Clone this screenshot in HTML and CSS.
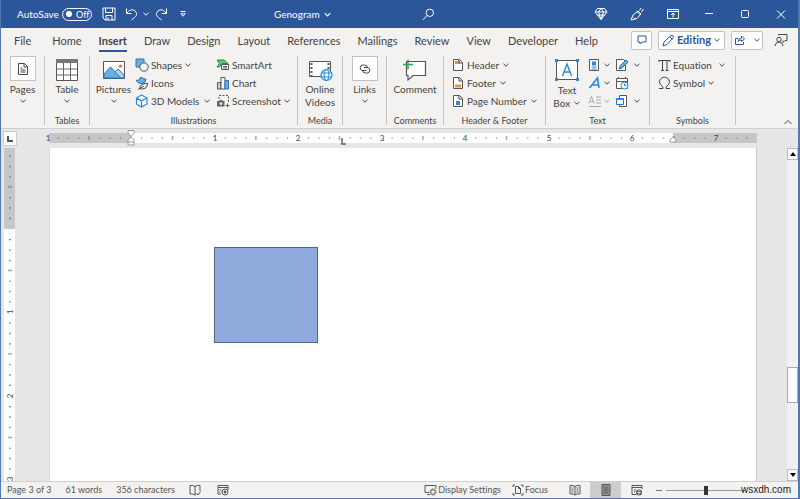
FILE: index.html
```html
<!DOCTYPE html>
<html lang="en">
<head>
<meta charset="utf-8">
<title>Genogram</title>
<link rel="stylesheet" href="styles.css">
</head>
<body>
<svg class="defs" aria-hidden="true">
  <symbol id="chev" viewBox="0 0 8 8"><path d="M1.500 2.800 4 5.200 6.500 2.800" fill="none" stroke="currentColor"/></symbol>
  <pattern id="inch" width="83.500" height="12" patternUnits="userSpaceOnUse" x="82" y="0">
    <path d="M10 6h1.200M20.400 6h1.200M30.800 6h1.200M51.600 6h1.200M62 6h1.200M72.400 6h1.200" stroke="#666" stroke-width="1.200"/>
    <path d="M41.500 4v4" stroke="#777"/>
  </pattern>
  <pattern id="vinch" width="12" height="83.500" patternUnits="userSpaceOnUse" x="0" y="81">
    <path d="M6 10v1.200M6 20.400v1.200M6 30.800v1.200M6 51.600v1.200M6 62v1.200M6 72.400v1.200" stroke="#666" stroke-width="1.600"/>
    <path d="M4 41.500h4" stroke="#777"/>
  </pattern>
</svg>
<div class="window">
  <header class="titlebar">
    <div class="quick">
      <span id="autosave">AutoSave</span>
      <button class="switch" role="switch" aria-checked="false" aria-labelledby="autosave"><i></i>Off</button>
      <button class="tool save" aria-label="Save"><svg width="14" height="14" viewBox="0 0 14 14"><path d="M1 1h12v12H3l-2-2zM3.500 1v4.500h7V1M4 13V8.500h6V13M6 10.500V13" class="ln"/></svg></button>
      <button class="tool undo" aria-label="Undo"><svg width="13" height="14" viewBox="0 0 13 14"><path d="M1.500 1.500v5h5M1.800 6.200C4 3 7.500 1.600 10 4s1.800 5-.5 6.500L6.500 13" class="ln"/></svg></button>
      <button class="tool" aria-label="Undo options"><svg width="8" height="8"><use href="#chev"/></svg></button>
      <button class="tool redo" aria-label="Redo"><svg width="13" height="14" viewBox="0 0 13 14"><path d="M11.500 1.500v5h-5M11.200 6.200C9 3 5.500 1.600 3 4s-1.800 5 .5 6.500L6.500 13" class="ln"/></svg></button>
      <button class="tool more" aria-label="Customize toolbar"><svg width="8" height="8" viewBox="0 0 8 8"><path d="M1.500 1.500h5M1.800 3.800h4.400L4 6.200z" class="ln"/></svg></button>
    </div>
    <button class="docname">Genogram <svg width="9" height="9" viewBox="0 0 8 8"><use href="#chev"/></svg></button>
    <button class="tool search" aria-label="Search"><svg width="13" height="13" viewBox="0 0 13 13"><circle cx="7.800" cy="4.800" r="3.700" class="ln"/><path d="M5 7.500 1 11.800" class="ln"/></svg></button>
    <div class="sys">
      <button class="tool" aria-label="Premium"><svg width="14" height="14" viewBox="0 0 14 14"><path d="M3.500 1.500h7L13 5l-6 7.500L1 5zM1 5h12M4.500 5 7 12.500 9.500 5 7 1.500zM3 8h8" class="ln"/></svg></button>
      <button class="tool" aria-label="Designer"><svg width="14" height="14" viewBox="0 0 14 14"><path d="M1 13 3 8l5-4 3 3-4 4.500L1.500 13M7 4.500l3.500 3.500M9.500 3.500 11 1M11.500 5 13.500 2M3.500 10.500 5 12" class="ln"/></svg></button>
      <button class="tool" aria-label="Ribbon display"><svg width="14" height="14" viewBox="0 0 14 14"><path d="M1.500 2.500h11v9h-11zM1.500 4.500h11M7 10.500V6M5 8l2-2 2 2" class="ln"/></svg></button>
      <button class="tool" aria-label="Minimize"><svg width="14" height="14" viewBox="0 0 14 14"><path d="M3 6.500h8" class="ln"/></svg></button>
      <button class="tool" aria-label="Maximize"><svg width="14" height="14" viewBox="0 0 14 14"><rect x="3.500" y="3.500" width="7" height="7" rx="1" class="ln"/></svg></button>
      <button class="tool" aria-label="Close"><svg width="14" height="14" viewBox="0 0 14 14"><path d="m3 3.500 8 8m0-8-8 8" class="ln"/></svg></button>
    </div>
  </header>

  <nav class="tabs">
    <a href="#file" class="file">File</a><a href="#home">Home</a><a href="#insert" class="active">Insert</a><a href="#draw">Draw</a><a href="#design">Design</a><a href="#layout">Layout</a><a href="#references">References</a><a href="#mailings">Mailings</a><a href="#review">Review</a><a href="#view">View</a><a href="#developer">Developer</a><a href="#help">Help</a>
    <div class="share">
      <button class="box" aria-label="Comments"><svg width="12" height="12" viewBox="0 0 12 12"><path d="M2 2h8v6H6L4 10V8H2z" class="ln"/></svg></button>
      <button class="box edit"><svg width="13" height="13" viewBox="0 0 13 13"><path d="m1 12 1-4 7-6.500q2.500-.5 2.500 2L5 10.500zM8 3l2.500 2.500" class="ln"/></svg>Editing<svg width="8" height="8"><use href="#chev"/></svg></button>
      <button class="box send" aria-label="Share"><svg width="12" height="12" viewBox="0 0 12 12"><path d="M4 4.500H1.500v6h8V8M4 7.500Q4.500 4 7.500 4V2l3 3-3 2.500V6Q5 6 4 7.500z" class="ln"/></svg><svg width="8" height="8"><use href="#chev"/></svg></button>
      <button class="tool people" aria-label="Catch up"><svg width="14" height="14" viewBox="0 0 14 14"><circle cx="5" cy="6.500" r="2.200" class="ln"/><path d="M1 13q.5-4 4-4t4 4M4.500 2.500v-1h8.500v6h-2L9 9.500V7.500" class="ln"/></svg></button>
    </div>
  </nav>

  <section class="ribbon">
    <div class="group">
      <button class="big"><span class="tile"><svg width="12" height="14" viewBox="0 0 12 14"><path d="M1.500 1.500h6L10.500 4.500v8h-9zM7 1.500V5h3.500M3.500 6h2M3.500 8h5M3.500 10h5" class="ln"/></svg></span>Pages<svg width="8" height="8"><use href="#chev"/></svg></button>
    </div>
    <div class="group">
      <button class="big"><span class="pic"><svg width="24" height="24" viewBox="0 0 24 24"><path d="M1.500 1.500h21v21h-21z" fill="#fff" stroke="#555"/><path d="M1 1h22v4H1z" fill="#777"/><path d="M1.500 11h21M1.500 17h21M8.500 5v17M15.500 5v17" stroke="#666"/></svg></span>Table<svg width="8" height="8"><use href="#chev"/></svg></button>
      <h2>Tables</h2>
    </div>
    <div class="group illus">
      <div class="row">
        <button class="big"><span class="pic"><svg width="24" height="24" viewBox="0 0 24 24"><path d="M1.500 3.500h21v17h-21z" fill="#fff" stroke="#555"/><path d="M2 16 8.500 9l11 11H2z" fill="#69afe5" stroke="#2176bd"/><path d="m13 14 3-3 6 6v3h-3z" fill="#a9d1f1" stroke="#2176bd"/><circle cx="18.500" cy="8" r="1.600" fill="#dc762c"/></svg></span>Pictures<svg width="8" height="8"><use href="#chev"/></svg></button>
        <div class="stack models">
          <button><svg width="14" height="14" viewBox="0 0 14 14"><path d="M1 1h8v8H1z" fill="#69afe5" stroke="#2176bd"/><circle cx="9" cy="9" r="4.200" fill="#f3f2f1" stroke="#555"/></svg>Shapes<svg width="8" height="8"><use href="#chev"/></svg></button>
          <button><svg width="14" height="14" viewBox="0 0 14 14"><path d="M1 4q2 1 3 0Q4 1 7 1.500L9 3H11Q11 7 7 7.500 2 7.500 1 4z" fill="#69afe5" stroke="#2176bd"/><path d="M5 12.500Q4 7.500 12.500 7.500q0 5.500-6 5.500zM3 13.500 9 10" class="ln"/></svg>Icons</button>
          <button class="wide"><svg width="14" height="14" viewBox="0 0 14 14"><path d="m6.500 1 5.500 3v6l-5.500 3L1.500 10V4zM1.500 4l5 3L12 4M6.500 7v6" fill="#fff" stroke="#2b88d8" stroke-width="1.200"/></svg>3D Models<svg width="8" height="8"><use href="#chev"/></svg></button>
        </div>
        <div class="stack">
          <button><svg width="14" height="14" viewBox="0 0 14 14"><path d="M1 2h7l4 3.500H6L3.500 9H1l2.500-3.500z" fill="#72bf7c" stroke="#268a43"/><path d="M5.500 6.500h7v5h-7zM7 8.500h4M7 10h4" fill="#fff" stroke="#555"/></svg>SmartArt</button>
          <button><svg width="14" height="14" viewBox="0 0 14 14"><path d="M1.500 6.500H5V13H1.500z" fill="#ccc" stroke="#555"/><path d="M5 1.500h4V13H5z" fill="#fff" stroke="#555"/><path d="M9 4.500h3.500V13H9z" fill="#69afe5" stroke="#2176bd"/></svg>Chart</button>
          <button><svg width="14" height="14" viewBox="0 0 14 14"><path d="M3 5V1.500h9.500V9" fill="none" stroke="#555" stroke-dasharray="2 1.500"/><path d="M1 7h2l1-1h2l1 1h1.500v5.500H1z" fill="#666"/><circle cx="5" cy="9.500" r="1.500" fill="#ddd"/><path d="M9.500 11.500h4M11.500 9.500v4" stroke="#268a43"/></svg>Screenshot<svg width="8" height="8"><use href="#chev"/></svg></button>
        </div>
      </div>
      <h2>Illustrations</h2>
    </div>
    <div class="group">
      <button class="big"><span class="pic"><svg width="25" height="24" viewBox="0 0 25 24"><path d="M1.500 3.500h21v15h-21z" fill="#fff" stroke="#555"/><path d="M3.500 5v13M20.500 5v13" stroke="#555" stroke-width="2" stroke-dasharray="2 2"/><circle cx="18.500" cy="17" r="5.500" fill="#fff" stroke="#1f87d5" stroke-width="1.200"/><ellipse cx="18.500" cy="17" rx="2.400" ry="5.500" fill="none" stroke="#1f87d5"/><path d="M13.500 15h10M13.500 19h10" stroke="#1f87d5"/></svg></span>Online<br>Videos</button>
      <h2>Media</h2>
    </div>
    <div class="group">
      <button class="big"><span class="tile"><svg width="14" height="12" viewBox="0 0 14 12"><path d="M8 7.500H4.500a2.800 2.800 0 0 1 0-5.500h2q3 0 3 3M6 4.500h3.500a2.800 2.800 0 0 1 0 5.500h-2q-3 0-3-3" class="ln"/></svg></span>Links<svg width="8" height="8"><use href="#chev"/></svg></button>
    </div>
    <div class="group">
      <button class="big"><span class="pic"><svg width="26" height="24" viewBox="0 0 26 24"><path d="M4.500 3.500h19v14H11L6 22v-4.500H4.500z" fill="#fff" stroke="#555" stroke-width="1.200"/><path d="M1 6.500h10M6 1.500v10" stroke="#33a457" stroke-width="1.400"/></svg></span>Comment</button>
      <h2>Comments</h2>
    </div>
    <div class="group">
      <div class="stack hf">
        <button><svg width="12" height="14" viewBox="0 0 12 14"><path d="M1.500 1.500h6l3 3v8h-9z" fill="#fff" stroke="#555"/><path d="M3 3h4.500v3H3z" fill="#e8963c"/><path d="M7 1.500V5h3.500" class="ln"/></svg>Header<svg width="8" height="8"><use href="#chev"/></svg></button>
        <button><svg width="12" height="14" viewBox="0 0 12 14"><path d="M1.500 1.500h6l3 3v8h-9z" fill="#fff" stroke="#555"/><path d="M3 8.500h6v3H3z" fill="#e8963c"/><path d="M7 1.500V5h3.500" class="ln"/></svg>Footer<svg width="8" height="8"><use href="#chev"/></svg></button>
        <button><svg width="12" height="14" viewBox="0 0 12 14"><path d="M1.500 1.500h6l3 3v8h-9z" fill="#fff" stroke="#555"/><path d="M4 7h4v4H4z" fill="#2b88d8"/><path d="M7 1.500V5h3.500" class="ln"/></svg>Page Number<svg width="8" height="8"><use href="#chev"/></svg></button>
      </div>
      <h2>Header &amp; Footer</h2>
    </div>
    <div class="group">
      <div class="row">
        <button class="big textbox"><span class="pic"><svg width="26" height="24" viewBox="0 0 26 24"><path d="M2.500 2.500h21v19h-21z" fill="#fff" stroke="#555"/><path d="M8.500 18 13 6l4.500 12M10 14h6" fill="none" stroke="#2b88d8" stroke-width="1.400"/><path d="M1 1h3v3H1zM22 1h3v3h-3zM1 20h3v3H1zM22 20h3v3h-3z" fill="#2b88d8"/></svg></span>Text<br>Box <svg width="8" height="8"><use href="#chev"/></svg></button>
        <div class="stack">
          <button aria-label="Quick Parts"><svg width="13" height="14" viewBox="0 0 13 14"><path d="M1.500 1.500h9v11h-9z" fill="#fff" stroke="#555"/><path d="M4 3.500h4v4H4z" fill="#2b88d8"/><path d="M3.500 9h5M3.500 11h5" stroke="#2b88d8"/></svg><svg width="8" height="8"><use href="#chev"/></svg></button>
          <button aria-label="WordArt"><svg width="13" height="14" viewBox="0 0 13 14"><path d="M1.500 12 9.500 2l1.500 10M4.500 9h6" fill="none" stroke="#2b88d8" stroke-width="1.600"/></svg><svg width="8" height="8"><use href="#chev"/></svg></button>
          <button aria-label="Drop Cap" disabled><svg width="13" height="14" viewBox="0 0 13 14"><path d="M1 9.500 3.500 2.500 6 9.500M2 7.500h3M8 3h5M8 6h5M8 9h5M1 12.500h12" class="ln"/></svg><svg width="8" height="8"><use href="#chev"/></svg></button>
        </div>
        <div class="stack">
          <button aria-label="Signature Line"><svg width="14" height="14" viewBox="0 0 14 14"><path d="M1.500 1.500h7l2 2v9h-9z" fill="#fff" stroke="#555"/><path d="m4 11 1-3 6-6 2 2-6 6z" fill="#69afe5" stroke="#2176bd"/></svg><svg class="far" width="8" height="8"><use href="#chev"/></svg></button>
          <button aria-label="Date &amp; Time"><svg width="14" height="14" viewBox="0 0 14 14"><path d="M1.500 2.500h11v10h-11zM1.500 5.500h11M3.500 1v2M10.500 1v2" fill="#fff" stroke="#555"/><circle cx="9.500" cy="9.500" r="3.500" fill="#fff" stroke="#2b88d8"/><path d="M9.500 7.500v2h2" fill="none" stroke="#2b88d8"/></svg></button>
          <button aria-label="Object"><svg width="14" height="14" viewBox="0 0 14 14"><path d="M4.500 1.500h7v11h-7z" fill="#fff" stroke="#555"/><path d="M1.500 4.500h7v6h-7z" fill="#fff" stroke="#2176bd"/><path d="M1 4h8v2H1z" fill="#2b88d8"/></svg><svg class="far" width="8" height="8"><use href="#chev"/></svg></button>
        </div>
      </div>
      <h2>Text</h2>
    </div>
    <div class="group">
      <div class="stack sym">
        <button><svg width="13" height="14" viewBox="0 0 13 14"><path d="M1 2.500h11M4.500 2.500V12M9 2.500V12M3 12.500h3M7.500 12.500h3M1 2v2M12 2v2" class="ln"/></svg>Equation<svg class="far" width="8" height="8"><use href="#chev"/></svg></button>
        <button><svg width="13" height="14" viewBox="0 0 13 14"><path d="M1 12.500h4V11Q1.500 8.500 1.500 6a5 4.800 0 0 1 10 0Q11.500 8.500 8 11v1.500h4" class="ln"/></svg>Symbol<svg width="8" height="8"><use href="#chev"/></svg></button>
      </div>
      <h2>Symbols</h2>
    </div>
    <button class="collapse" aria-label="Collapse the ribbon"><svg width="10" height="8" viewBox="0 0 10 8"><path d="m1.500 6 3.500-3.500L8.500 6" class="ln"/></svg></button>
  </section>

  <div class="rulerbar">
    <button class="tabstop" aria-label="Tab selector"><svg width="6" height="6" viewBox="0 0 6 6"><path d="M1 0v5h5" fill="none" stroke="#555" stroke-width="2"/></svg></button>
    <svg class="hruler" height="19">
      <path d="M0 4h708v10H0z" fill="#fff"/><path d="M0 4h82v10H0zM624 4h84v10h-84z" fill="#c6c6c6"/>
      <g transform="translate(0 3)"><path d="M6 0h696v12H6z" fill="url(#inch)"/></g>
      <g class="num"><text x="-1" y="12">1</text><text x="166" y="12">1</text><text x="249" y="12">2</text><text x="333" y="12">3</text><text x="416" y="12">4</text><text x="500" y="12">5</text><text x="583" y="12">6</text><text x="667" y="12">7</text></g>
      <path d="M79 1.500h6V4l-3 3.500L79 4zM79 13v-2l3-3 3 3v5h-6zM79 13h6M621 13v-2l3-3 3 3v2z" fill="#fff" stroke="#999"/>
      <path d="M293 9v6h4" fill="none" stroke="#666" stroke-width="1.500"/>
    </svg>
  </div>

  <main class="work">
    <div class="vruler">
      <svg width="12" height="340" viewBox="0 0 12 340">
        <path d="M0 0h11v81H0z" fill="#c6c6c6"/><path d="M0 81h11v259H0z" fill="#fff"/><path d="M0 3h12v337H0z" fill="url(#vinch)"/>
        <g class="num"><text transform="translate(9 164) rotate(-90)">1</text><text transform="translate(9 248) rotate(-90)">2</text><text transform="translate(9 331) rotate(-90)">3</text></g>
      </svg>
    </div>
    <article class="page"><div class="square"></div></article>
    <div class="scroll">
      <button aria-label="Scroll up"><svg width="6" height="4"><path d="M0 4h6L3 0z"/></svg></button>
      <div class="track"><i></i></div>
      <button aria-label="Scroll down"><svg width="6" height="4"><path d="M0 0h6L3 4z"/></svg></button>
    </div>
  </main>

  <footer class="status">
    <span>Page 3 of 3</span><span>61 words</span><span>356 characters</span>
    <button aria-label="Proofing"><svg width="12" height="12" viewBox="0 0 12 12"><path d="M6 2.500Q4 1 1 1.500V10Q4 9.500 6 11M6 2.500Q8 1 11 1.500V7M6 2.500V11l1-.5M7.500 9l1.500 2 2.500-3.500" class="ln"/></svg></button>
    <button class="macro" aria-label="Macro recording"><svg width="12" height="12" viewBox="0 0 12 12"><path d="M1 1.500h10V6M1 1.500V10h3M1 3.500h10M2.500 6h2M2.500 8h1" class="ln"/><circle cx="8" cy="8" r="3" class="ln"/><circle cx="8" cy="8" r="1.400" fill="#555"/></svg></button>
    <div class="views">
      <button class="disp"><svg width="13" height="12" viewBox="0 0 13 12"><path d="M5 8.500H1v-7h11V5M3 10.500h3" class="ln"/><circle cx="9" cy="8" r="2.300" class="ln"/><circle cx="9" cy="8" r="3.200" fill="none" stroke="#555" stroke-dasharray="1 1.200"/></svg>Display Settings</button>
      <button class="focus"><svg width="12" height="12" viewBox="0 0 12 12"><path d="M3 1H1v2M9 1h2v2M1 9v2h2M11 9v2H9M3.500 2.500h3l2 2v5h-5zM6.500 2.500v2h2" class="ln"/></svg>Focus</button>
      <button class="view" aria-label="Read Mode"><svg width="12" height="12" viewBox="0 0 12 12"><path d="M6 2.500Q4 1 1 1.500V10Q4 9.500 6 11 8 9.500 11 10V1.500Q8 1 6 2.500V11M2.500 4h2M2.500 6h2M2.500 8h2M7.500 4h2M7.500 6h2M7.500 8h2" class="ln"/></svg></button>
      <button class="view on" aria-label="Print Layout"><svg width="10" height="12" viewBox="0 0 10 12"><path d="M1 .5h8v11H1z" fill="#999" stroke="#555"/><path d="M2.500 3h5M2.500 5h5M2.500 7h5M2.500 9h5" stroke="#555"/></svg></button>
      <button class="view" aria-label="Web Layout"><svg width="12" height="12" viewBox="0 0 12 12"><path d="M5 10.500H1v-9h10V5M1 3.500h10M3 6h2M3 8h1" class="ln"/><circle cx="8" cy="8.500" r="3" fill="#555"/><path d="M8 6v5M6 8.500h4" stroke="#ccc"/></svg></button>
      <button class="step" aria-label="Zoom out"><svg width="6" height="6"><path d="M0 3.500h6" stroke="#777"/></svg></button>
      <input type="range" min="0" max="100" value="50" aria-label="Zoom">
      <span class="mark">wsxdh.com</span>
    </div>
  </footer>
</div>
</body>
</html>
```
FILE: styles.css
```css
* { box-sizing: border-box; }
body { margin: 0; font: 10px/14px Lato, "Noto Sans", sans-serif; font-variant-ligatures: none; color: #444; }
svg { flex: none; display: block; }
.defs { position: absolute; width: 0; height: 0; }
.ln { fill: none; stroke: currentColor; stroke-width: 1; }
.num { font-size: 8px; fill: #444; text-anchor: middle; }
button { font: inherit; font-variant-ligatures: none; color: inherit; background: none; border: 0; padding: 0; margin: 0; display: flex; align-items: center; white-space: nowrap; }

.window { height: 100vh; display: flex; flex-direction: column; border: 1px solid #5478b4; border-top: 0; border-right-width: 2px; background: #f3f2f1; overflow: hidden; }

.titlebar { flex: none; height: 28px; background: #2b579a; color: #fff; display: grid; grid-template-columns: 273px 148px 1fr auto; align-items: center; }
.quick { display: flex; align-items: center; padding-left: 16px; }
#autosave { width: 45px; }
.switch { width: 30px; height: 13px; border: 1px solid #fff; border-radius: 7px; padding-left: 3px; gap: 4px; font-size: 9px; line-height: 11px; }
.switch i { width: 6px; height: 6px; border-radius: 50%; background: #fff; }
.save { margin-left: 10px; }
.undo { margin: 0 4px 0 9px; }
.redo { margin: 0 11px 0 5px; }
.docname { gap: 3px; }
.sys { display: flex; gap: 22px; padding-right: 10px; }

.tabs { flex: none; height: 26px; display: flex; align-items: center; gap: 17px; padding-left: 13px; font-size: 11px; line-height: 16px; }
.tabs a { color: inherit; text-decoration: none; padding-bottom: 1px; border-bottom: 2px solid transparent; margin-top: 2px; }
.tabs .file { margin-right: 4px; }
.tabs .active { font-weight: 700; border-color: #2b579a; }
.share { margin-left: auto; display: flex; align-items: center; gap: 6px; padding-right: 10px; color: #2b579a; margin-bottom: 2px; }
.box { height: 19px; border: 1px solid #c4c2c0; border-radius: 2px; background: #fff; justify-content: center; width: 21px; }
.edit { width: 67px; gap: 2px; font-weight: 700; }
.send { width: 32px; gap: 7px; }
.people { color: #444; margin-left: 5px; }

.ribbon { flex: none; height: 75px; display: grid; grid-template-columns: 44px 45px 208px 45px 44px 57px 102px 104px 86px 1fr; padding: 2px 0; border-bottom: 1px solid #d0d0d0; }
.group { border-right: 1px solid #c4c4c4; height: 69px; display: flex; flex-direction: column; justify-content: space-between; align-items: center; }
.group h2 { margin: 0; font-size: 9px; line-height: 8px; font-weight: 400; }
.row { display: flex; align-self: stretch; }
.big { flex-direction: column; line-height: 13px; }
.big > svg { margin-top: 1px; }
.tile { width: 26px; height: 25px; border: 1px solid #c4c2c0; background: #fff; display: grid; place-items: center; margin-bottom: 2px; }
.pic { height: 27px; display: grid; place-items: center; }
.textbox { display: block; width: 38px; text-align: center; margin: 0 2px; }
.textbox > svg { display: inline-block; }
.stack { display: flex; flex-direction: column; }
.stack button { height: 18px; gap: 2px; }
.illus .big { width: 45px; padding-left: 2px; }
.models { width: 81px; }
.models .wide svg:last-child { margin-left: 2px; }
.hf, .sym { align-self: stretch; padding-left: 8px; }
.hf button { gap: 3px; }
.far { margin-left: 4px; }
.row .stack + .stack .far { margin-left: 2px; }
.group .row > .stack:not(.models) { margin-right: 4px; }
.stack button:disabled { color: #aaa; }
.collapse { justify-self: end; align-self: end; padding: 0 5px 0 0; }

.rulerbar { flex: none; height: 19px; background: #e6e6e6; display: flex; }
.tabstop { width: 14px; height: 15px; margin: 2px 32px 0 2px; border: 1px solid #ccc; background: #fff; justify-content: center; }
.hruler { flex: 1; min-width: 0; margin-right: 40px; overflow: visible; }

.work { flex: 1; min-height: 0; background: #e6e6e6; display: grid; grid-template-columns: 48px 1fr 11px; }
.vruler { padding-left: 3px; overflow: hidden; min-height: 0; }
.page { position: relative; background: #fff; margin-right: 30px; border-right: 1px solid #c8c8c8; border-left: 1px solid #ddd; }
.square { position: absolute; left: 164px; top: 99px; width: 104px; height: 96px; background: #8faadc; border: 1px solid #50667f; }
.scroll { display: flex; flex-direction: column; background: #f1f1f1; min-height: 0; }
.scroll button { height: 12px; background: #fff; border: 1px solid #bbb; justify-content: center; }
.track { flex: 1; display: flex; flex-direction: column; justify-content: flex-end; padding-bottom: 66px; }
.track i { height: 36px; background: #fff; border: 1px solid #aaa; }

.status { flex: none; height: 17px; border-top: 1px solid #d0d0d0; display: flex; align-items: center; gap: 14px; padding-left: 6px; font-size: 9px; color: #555; }
.macro { margin-left: 2px; }
.views { margin-left: auto; display: flex; align-items: center; align-self: stretch; }
.disp, .focus { gap: 1px; margin-right: 11px; }
.view { width: 31px; align-self: stretch; justify-content: center; }
.on { background: #cfcdcb; }
.step { margin: 0 4px; }
input[type=range] { appearance: none; width: 80px; height: 10px; margin: 0; background: linear-gradient(#999, #999) center / 100% 1px no-repeat; }
input[type=range]::-webkit-slider-thumb { appearance: none; width: 4px; height: 9px; background: #333; }
.mark { width: 52px; display: flex; justify-content: flex-end; padding-right: 7px; white-space: nowrap; font: 10px/12px "Liberation Sans", sans-serif; color: #222; }
```
